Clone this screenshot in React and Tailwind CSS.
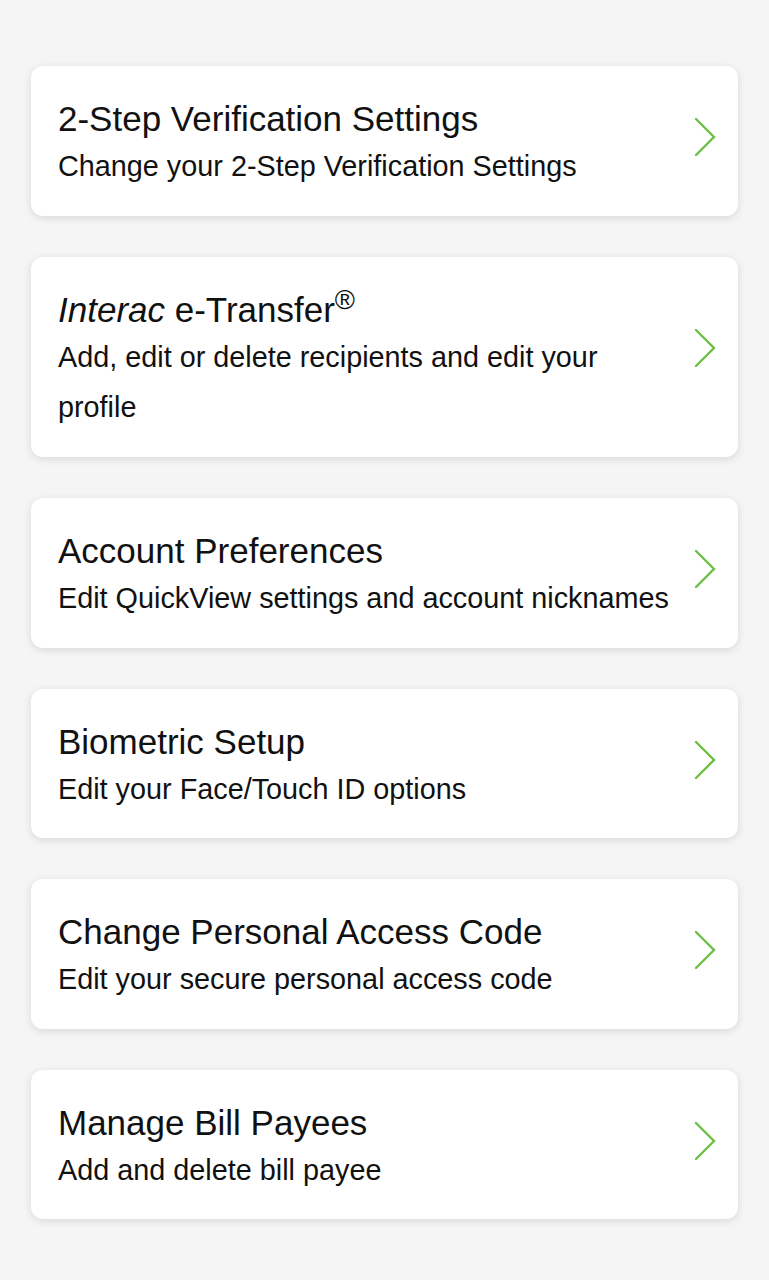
import React from "react";

const items = [
  {
    title: "2-Step Verification Settings",
    desc: "Change your 2-Step Verification Settings",
  },
  {
    title: (
      <>
        <span className="italic">Interac</span> e-Transfer
        <sup className="text-[0.78em] relative -top-[0.45em]">®</sup>
      </>
    ),
    desc: "Add, edit or delete recipients and edit your profile",
    tall: true,
  },
  {
    title: "Account Preferences",
    desc: "Edit QuickView settings and account nicknames",
  },
  {
    title: "Biometric Setup",
    desc: "Edit your Face/Touch ID options",
  },
  {
    title: "Change Personal Access Code",
    desc: "Edit your secure personal access code",
  },
  {
    title: "Manage Bill Payees",
    desc: "Add and delete bill payee",
  },
];

const Chevron = () => (
  <svg width="24" height="40" viewBox="0 0 24 40" fill="none">
    <path
      d="M3 2 L21 20 L3 38"
      stroke="#6cbf45"
      strokeWidth="2.4"
      strokeLinecap="round"
      strokeLinejoin="miter"
    />
  </svg>
);

const SettingsCard = ({ title, desc, tall }) => (
  <div
    className={`bg-white rounded-[12px] shadow-[0_2px_8px_rgba(0,0,0,0.12)] pl-[27px] pr-[21px] pt-[31px] flex items-center ${
      tall ? "pb-[25.5px]" : "pb-[24.5px]"
    }`}
  >
    <div className="flex-1 pr-4">
      <div className="text-[35px] leading-[44px] text-[#111]">{title}</div>
      <div className="text-[28.8px] leading-[50px] text-[#111]">{desc}</div>
    </div>
    <div className={tall ? "mb-[24px]" : "mb-[14px]"}>
      <Chevron />
    </div>
  </div>
);

export default function App() {
  return (
    <div
      className="min-h-[1280px] bg-[#f5f5f5] px-[31px] pt-[66px] pb-[62px] flex flex-col gap-[41px]"
      style={{ fontFamily: '"Liberation Sans", Arial, sans-serif' }}
    >
      {items.map((it, i) => (
        <SettingsCard key={i} {...it} />
      ))}
    </div>
  );
}
